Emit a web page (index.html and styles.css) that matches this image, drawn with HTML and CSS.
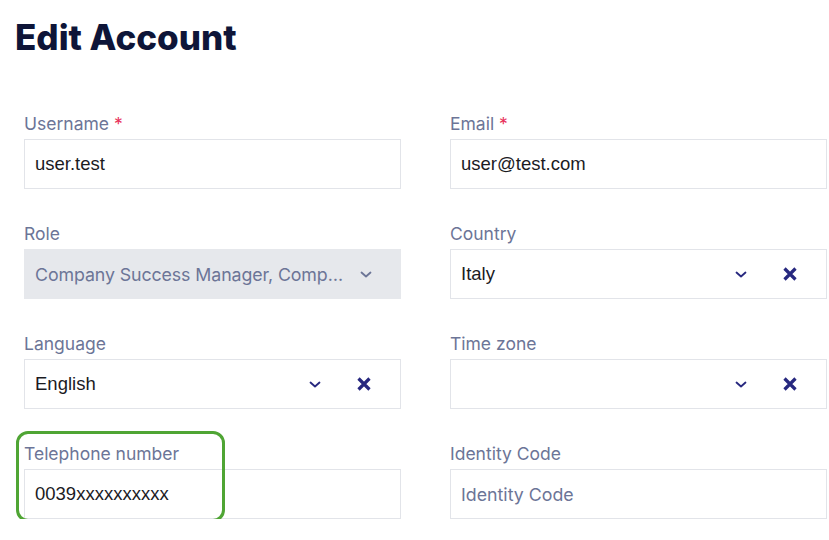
FILE: index.html
```html
<!DOCTYPE html>
<html lang="en">
<head>
  <meta charset="UTF-8">
  <meta name="viewport" content="width=device-width, initial-scale=1.0">
  <title>Edit Account</title>
  <link rel="stylesheet" href="styles.css">
</head>
<body>
  <h1 class="title">Edit Account</h1>

  <form class="account-form">
    <div class="field">
      <label class="label">Username <span class="req">*</span></label>
      <div class="input"><span class="value">user.test</span></div>
    </div>
    <div class="field">
      <label class="label">Email <span class="req">*</span></label>
      <div class="input"><span class="value">user@test.com</span></div>
    </div>

    <div class="field">
      <label class="label">Role</label>
      <div class="input select disabled">
        <span class="value muted ellipsis">Company Success Manager, Company Admin</span>
        <svg class="chevron" viewBox="0 0 12 7" width="12" height="7"><path d="M1.5 1.5 6 5.5 10.5 1.5" /></svg>
      </div>
    </div>
    <div class="field">
      <label class="label">Country</label>
      <div class="input select">
        <span class="value">Italy</span>
        <svg class="chevron" viewBox="0 0 12 7" width="12" height="7"><path d="M1.5 1.5 6 5.5 10.5 1.5" /></svg>
        <svg class="clear" viewBox="0 0 14 14" width="14" height="14"><path d="M1.5 1.5 12.5 12.5M12.5 1.5 1.5 12.5" /></svg>
      </div>
    </div>

    <div class="field">
      <label class="label">Language</label>
      <div class="input select">
        <span class="value">English</span>
        <svg class="chevron" viewBox="0 0 12 7" width="12" height="7"><path d="M1.5 1.5 6 5.5 10.5 1.5" /></svg>
        <svg class="clear" viewBox="0 0 14 14" width="14" height="14"><path d="M1.5 1.5 12.5 12.5M12.5 1.5 1.5 12.5" /></svg>
      </div>
    </div>
    <div class="field">
      <label class="label">Time zone</label>
      <div class="input select">
        <span class="value"></span>
        <svg class="chevron" viewBox="0 0 12 7" width="12" height="7"><path d="M1.5 1.5 6 5.5 10.5 1.5" /></svg>
        <svg class="clear" viewBox="0 0 14 14" width="14" height="14"><path d="M1.5 1.5 12.5 12.5M12.5 1.5 1.5 12.5" /></svg>
      </div>
    </div>

    <div class="field highlighted">
      <label class="label">Telephone number</label>
      <div class="input"><span class="value">0039xxxxxxxxxx</span></div>
      <div class="focus-ring"></div>
    </div>
    <div class="field">
      <label class="label">Identity Code</label>
      <div class="input"><span class="value muted">Identity Code</span></div>
    </div>
  </form>
</body>
</html>
```

FILE: styles.css
```css
body {
  margin: 0;
  background: #ffffff;
  font-family: Inter, "Noto Sans", sans-serif;
}

.title {
  margin: 0;
  padding: 15px 0 0 15px;
  height: 114px;
  box-sizing: border-box;
  font-size: 35px;
  line-height: 44px;
  font-weight: 800;
  color: #0e1538;
}

.account-form {
  display: grid;
  grid-template-columns: 377px 377px;
  column-gap: 49px;
  row-gap: 35px;
  padding-left: 24px;
}

.field {
  position: relative;
}

.label {
  display: block;
  height: 25px;
  font-size: 17.5px;
  line-height: 20px;
  color: #6c7597;
}

.req {
  color: #e8335c;
}

.input {
  display: flex;
  align-items: center;
  height: 50px;
  box-sizing: border-box;
  border: 1px solid #e2e4e9;
  padding: 0 10px;
  font-family: "Liberation Sans", Arial, sans-serif;
  font-size: 18.5px;
  color: #1b1b1f;
}

.value {
  flex: 1;
  min-width: 0;
}

.muted {
  color: #6c7597;
  font-family: Inter, "Noto Sans", sans-serif;
  font-size: 17.8px;
}

.ellipsis {
  white-space: nowrap;
  overflow: hidden;
  text-overflow: ellipsis;
}

.select {
  padding-right: 29px;
}

.disabled {
  background: #e6e8ec;
  border-color: #e6e8ec;
  padding-right: 28px;
}

.chevron {
  flex: none;
  fill: none;
  stroke: #27287f;
  stroke-width: 1.8;
  stroke-linecap: round;
  stroke-linejoin: round;
}

.disabled .chevron {
  stroke: #6c7597;
  margin-left: 10px;
}

.disabled .value {
  letter-spacing: -0.1px;
}

.clear {
  flex: none;
  margin-left: 36px;
  fill: none;
  stroke: #27287f;
  stroke-width: 3.2;
}

/* green outline drawn around the phone field */
.focus-ring {
  position: absolute;
  left: -8px;
  top: -13px;
  width: 209px;
  height: 91px;
  box-sizing: border-box;
  border: 3.5px solid #4fa534;
  border-radius: 12px;
  pointer-events: none;
}
```
